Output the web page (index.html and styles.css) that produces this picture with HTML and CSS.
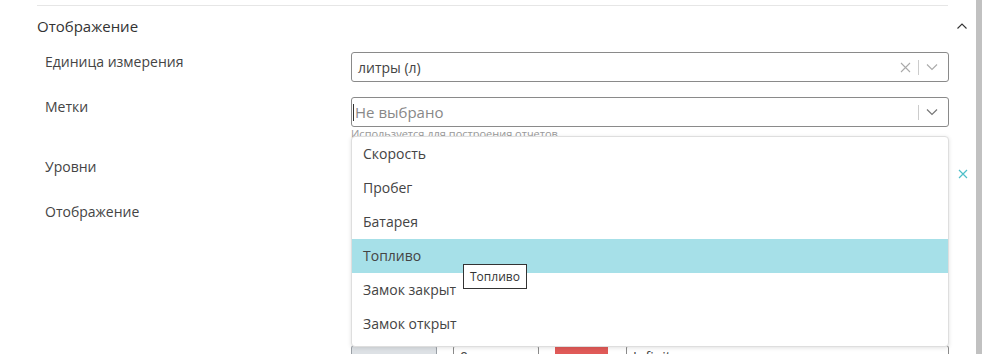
FILE: index.html
```html
<!DOCTYPE html>
<html lang="ru">
<head>
<meta charset="utf-8">
<link rel="stylesheet" href="styles.css">
</head>
<body>
<div class="page">
  <div class="main">
    <div class="rule"></div>
    <div class="section-head">
      <span class="title">Отображение</span>
      <svg class="collapse" width="12" height="8" viewBox="0 0 12 8"><path d="M1.5 6.5 L6 2 L10.5 6.5" fill="none" stroke="#333" stroke-width="1.1"/></svg>
    </div>

    <div class="row row-unit">
      <div class="label">Единица измерения</div>
      <div class="control">
        <div class="select">
          <span class="value">литры (л)</span>
          <span class="icons">
            <svg width="11" height="11" viewBox="0 0 11 11"><path d="M1 1 L10 10 M10 1 L1 10" stroke="#aaa" stroke-width="1.1"/></svg>
            <span class="sep"></span>
            <svg width="12" height="8" viewBox="0 0 12 8"><path d="M1 1.5 L6 6.5 L11 1.5" fill="none" stroke="#aaa" stroke-width="1.1"/></svg>
          </span>
        </div>
      </div>
    </div>

    <div class="row row-tags">
      <div class="label">Метки</div>
      <div class="control">
        <div class="select">
          <span class="caret"></span><span class="placeholder">Не выбрано</span>
          <span class="icons">
            <span class="sep"></span>
            <svg width="12" height="8" viewBox="0 0 12 8"><path d="M1 1.5 L6 6.5 L11 1.5" fill="none" stroke="#777" stroke-width="1.2"/></svg>
          </span>
        </div>
        <div class="help">Используется для построения отчетов</div>
        <ul class="dropdown">
          <li>Скорость</li>
          <li>Пробег</li>
          <li>Батарея</li>
          <li class="active">Топливо</li>
          <li>Замок закрыт</li>
          <li>Замок открыт</li>
        </ul>
        <div class="tooltip">Топливо</div>
      </div>
    </div>

    <div class="row row-levels">
      <div class="label">Уровни</div>
      <div class="control"></div>
      <svg class="remove" width="10" height="10" viewBox="0 0 10 10"><path d="M1 1 L9 9 M9 1 L1 9" stroke="#4fbfc9" stroke-width="1.2"/></svg>
    </div>

    <div class="row row-display">
      <div class="label">Отображение</div>
      <div class="control"></div>
    </div>

    <div class="row row-level-item">
      <div class="label"></div>
      <div class="control level">
        <div class="btn"></div>
        <div class="field">0</div>
        <div class="swatch"></div>
        <div class="field wide">Infinity</div>
      </div>
    </div>
  </div>
  <div class="scrollbar"></div>
</div>
</body>
</html>
```
FILE: styles.css
```css
* { box-sizing: border-box; }
html, body { margin: 0; padding: 0; background: #fff; }
body {
  font-family: "Open Sans", "Liberation Sans", sans-serif;
  color: #444;
  font-size: 14px;
}
.page {
  display: flex;
  width: 982px;
  height: 354px;
  overflow: hidden;
}
.main {
  flex: 1;
  padding-left: 37px;
  padding-top: 5px;
}
.scrollbar {
  width: 6px;
  background: #c1c1c1;
}
.rule {
  width: 911px;
  height: 1px;
  background: #e6e6e6;
}
.section-head {
  display: flex;
  align-items: center;
  justify-content: space-between;
  width: 931px;
  height: 40px;
  padding-bottom: 1px;
}
.title {
  font-size: 15px;
  font-weight: 500;
  color: #333;
}
.collapse { margin-right: 0; margin-top: 0; }

.row {
  display: flex;
  position: relative;
}
.label {
  width: 314px;
  padding-left: 8px;
  padding-top: 0;
  line-height: 20px;
  color: #444;
}
.control {
  width: 598px;
  position: relative;
}
.row-unit { margin-top: 6px; height: 45px; }
.row-tags { height: 60px; }
.row-levels { height: 45px; }
.row-display { height: 143px; }

.select {
  height: 30px;
  border: 1px solid #8a8a8a;
  border-radius: 3px;
  display: flex;
  align-items: center;
  padding-left: 6px;
  background: #fff;
}
.value { flex: 1; color: #444; font-size: 14px; }
.placeholder { flex: 1; color: #888; font-size: 15px; padding-left: 1px; }
.caret {
  width: 1px;
  height: 17px;
  background: #333;
}
.row-tags .select { padding-left: 1px; }
.icons {
  display: flex;
  align-items: center;
  gap: 7px;
  padding-right: 10px;
}
.sep {
  width: 1px;
  height: 15px;
  background: #ccc;
}
.help {
  font-size: 11px;
  color: #999;
  line-height: 14px;
}
.dropdown {
  position: absolute;
  left: 0;
  top: 39px;
  width: 598px;
  margin: 0;
  padding: 0 0 5px 0;
  list-style: none;
  background: #fff;
  border: 1px solid #dedede;
  border-radius: 4px;
  box-shadow: 0 1px 4px rgba(0,0,0,0.12);
  z-index: 5;
}
.dropdown li {
  height: 34px;
  line-height: 34px;
  padding-left: 11px;
  color: #444;
  font-size: 14px;
}
.dropdown li.active { background: #a6e0e8; }
.tooltip {
  position: absolute;
  left: 112px;
  top: 167px;
  height: 25px;
  padding: 0 6px;
  line-height: 23px;
  font-size: 12px;
  color: #333;
  background: #fff;
  border: 1px solid #333;
  z-index: 6;
}
.remove {
  position: absolute;
  left: 921px;
  top: 12px;
}
.level {
  display: flex;
  gap: 16px;
  height: 30px;
}
.btn {
  width: 86px;
  height: 30px;
  background: #dde1e5;
  border: 1px solid #9aa0a6;
  border-radius: 3px;
}
.field {
  width: 86px;
  height: 30px;
  border: 1px solid #8a8a8a;
  border-radius: 3px;
  padding-left: 6px;
  line-height: 22px;
  color: #444;
}
.field.wide { flex: 1; margin-left: 2px; }
.swatch {
  width: 53px;
  height: 30px;
  background: #e05a58;
  border-radius: 2px;
}
```
